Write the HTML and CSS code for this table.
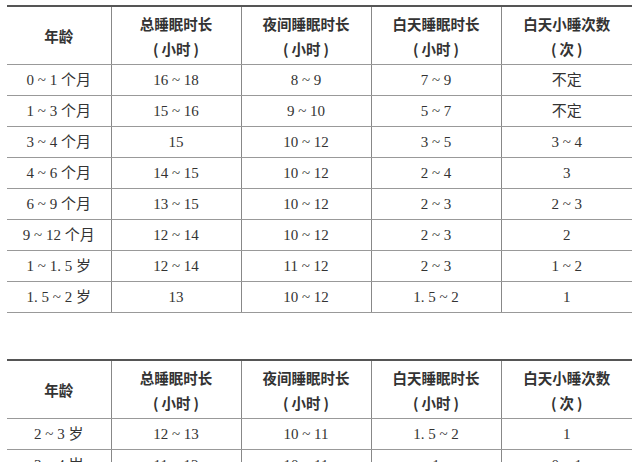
FILE: index.html
```html
<!DOCTYPE html>
<html lang="zh">
<head>
<meta charset="utf-8">
<link rel="stylesheet" href="styles.css">
</head>
<body>
<div class="page">
<table class="sleep">
  <colgroup><col class="c1"><col class="c"><col class="c"><col class="c"><col class="c5"></colgroup>
  <thead>
    <tr>
      <th>年龄</th>
      <th>总睡眠时长<br>(&thinsp;小时&thinsp;)</th>
      <th>夜间睡眠时长<br>(&thinsp;小时&thinsp;)</th>
      <th>白天睡眠时长<br>(&thinsp;小时&thinsp;)</th>
      <th>白天小睡次数<br>(&thinsp;次&thinsp;)</th>
    </tr>
  </thead>
  <tbody>
    <tr><td>0 ~ 1 个月</td><td>16 ~ 18</td><td>8 ~ 9</td><td>7 ~ 9</td><td>不定</td></tr>
    <tr><td>1 ~ 3 个月</td><td>15 ~ 16</td><td>9 ~ 10</td><td>5 ~ 7</td><td>不定</td></tr>
    <tr><td>3 ~ 4 个月</td><td>15</td><td>10 ~ 12</td><td>3 ~ 5</td><td>3 ~ 4</td></tr>
    <tr><td>4 ~ 6 个月</td><td>14 ~ 15</td><td>10 ~ 12</td><td>2 ~ 4</td><td>3</td></tr>
    <tr><td>6 ~ 9 个月</td><td>13 ~ 15</td><td>10 ~ 12</td><td>2 ~ 3</td><td>2 ~ 3</td></tr>
    <tr><td>9 ~ 12 个月</td><td>12 ~ 14</td><td>10 ~ 12</td><td>2 ~ 3</td><td>2</td></tr>
    <tr><td>1 ~ 1. 5 岁</td><td>12 ~ 14</td><td>11 ~ 12</td><td>2 ~ 3</td><td>1 ~ 2</td></tr>
    <tr><td>1. 5 ~ 2 岁</td><td>13</td><td>10 ~ 12</td><td>1. 5 ~ 2</td><td>1</td></tr>
  </tbody>
</table>

<table class="sleep second">
  <colgroup><col class="c1"><col class="c"><col class="c"><col class="c"><col class="c5"></colgroup>
  <thead>
    <tr>
      <th>年龄</th>
      <th>总睡眠时长<br>(&thinsp;小时&thinsp;)</th>
      <th>夜间睡眠时长<br>(&thinsp;小时&thinsp;)</th>
      <th>白天睡眠时长<br>(&thinsp;小时&thinsp;)</th>
      <th>白天小睡次数<br>(&thinsp;次&thinsp;)</th>
    </tr>
  </thead>
  <tbody>
    <tr><td>2 ~ 3 岁</td><td>12 ~ 13</td><td>10 ~ 11</td><td>1. 5 ~ 2</td><td>1</td></tr>
    <tr><td>3 ~ 4 岁</td><td>11 ~ 12</td><td>10 ~ 11</td><td>1</td><td>0 ~ 1</td></tr>
  </tbody>
</table>
</div>
</body>
</html>
```

FILE: styles.css
```css
html, body {
  margin: 0;
  padding: 0;
  background: #ffffff;
}
body {
  overflow: hidden;
  color: #333333;
  font-family: "Liberation Serif", "Noto Sans CJK SC", serif;
}
.page {
  padding: 5px 0 0 7px;
}
.sleep {
  border-collapse: collapse;
  width: 625px;
  table-layout: fixed;
  border-top: 2px solid #555555;
  border-bottom: 1px solid #999999;
}
.second {
  margin-top: 46px;
}
.c1 { width: 104px; }
.c { width: 130px; }
.c5 { width: 131px; }
.sleep th,
.sleep td {
  padding: 0;
  text-align: center;
  vertical-align: middle;
}
.sleep th + th,
.sleep td + td {
  border-left: 1px solid #888888;
}
.sleep th {
  height: 57px;
  font-family: "Noto Sans CJK SC", "Noto Sans", sans-serif;
  font-weight: 700;
  font-size: 14.5px;
  line-height: 25px;
  color: #333333;
  border-bottom: 1px solid #999999;
}
.sleep td {
  height: 30px;
  font-size: 15px;
  line-height: 20px;
  border-bottom: 1px solid #999999;
}
```
